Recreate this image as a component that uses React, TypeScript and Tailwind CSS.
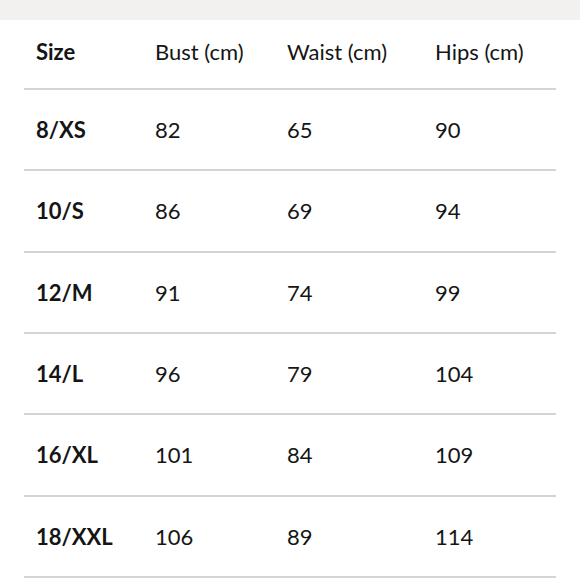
const rows = [
  ['8/XS', '82', '65', '90'],
  ['10/S', '86', '69', '94'],
  ['12/M', '91', '74', '99'],
  ['14/L', '96', '79', '104'],
  ['16/XL', '101', '84', '109'],
  ['18/XXL', '106', '89', '114'],
];

export default function App() {
  return (
    <div className="w-[580px] h-[580px] bg-white overflow-hidden text-[#151515]" style={{ fontFamily: 'Lato, "Open Sans", sans-serif' }}>
      <div className="h-[20px] bg-[#f2f1f0]" />
      <div className="px-[24px]">
        <div className="grid grid-cols-[119px_132px_148px_1fr] items-center pl-[12px] h-[70px] pb-[6px] border-b-2 border-[#d4d4d4] text-[22px]">
          <span className="font-bold">Size</span>
          <span>Bust (cm)</span>
          <span>Waist (cm)</span>
          <span>Hips (cm)</span>
        </div>
        {rows.map(r => (
          <div key={r[0]} className="grid grid-cols-[119px_132px_148px_1fr] items-center pl-[12px] h-[81.33px] border-b-2 border-[#d4d4d4] text-[22px]">
            <span className="font-bold">{r[0]}</span>
            <span>{r[1]}</span>
            <span>{r[2]}</span>
            <span>{r[3]}</span>
          </div>
        ))}
      </div>
    </div>
  );
}
